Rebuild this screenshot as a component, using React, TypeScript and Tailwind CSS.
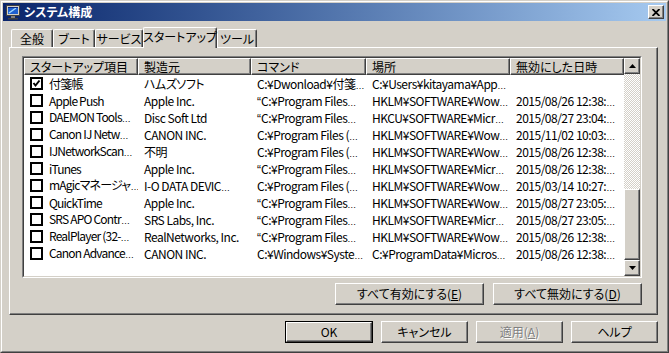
import React from 'react';

type Row = { on: boolean; name: string; maker: string; cmd: string; loc: string; date: string };

const rows: Row[] = [
  { on: true, name: '付箋帳', maker: 'ハムズソフト', cmd: 'C:¥Dwonload¥付箋…', loc: 'C:¥Users¥kitayama¥App…', date: '' },
  { on: false, name: 'Apple Push', maker: 'Apple Inc.', cmd: '“C:¥Program Files…', loc: 'HKLM¥SOFTWARE¥Wow…', date: '2015/08/26 12:38:…' },
  { on: false, name: 'DAEMON Tools…', maker: 'Disc Soft Ltd', cmd: '“C:¥Program Files…', loc: 'HKCU¥SOFTWARE¥Micr…', date: '2015/08/27 23:04:…' },
  { on: false, name: 'Canon IJ Netw…', maker: 'CANON INC.', cmd: 'C:¥Program Files (…', loc: 'HKLM¥SOFTWARE¥Wow…', date: '2015/11/02 10:03:…' },
  { on: false, name: 'IJNetworkScan…', maker: '不明', cmd: 'C:¥Program Files (…', loc: 'HKLM¥SOFTWARE¥Wow…', date: '2015/08/26 12:38:…' },
  { on: false, name: 'iTunes', maker: 'Apple Inc.', cmd: '“C:¥Program Files…', loc: 'HKLM¥SOFTWARE¥Micr…', date: '2015/08/26 12:38:…' },
  { on: false, name: 'mAgicマネージャ…', maker: 'I-O DATA DEVIC…', cmd: 'C:¥Program Files (…', loc: 'HKLM¥SOFTWARE¥Wow…', date: '2015/03/14 10:27:…' },
  { on: false, name: 'QuickTime', maker: 'Apple Inc.', cmd: '“C:¥Program Files…', loc: 'HKLM¥SOFTWARE¥Wow…', date: '2015/08/27 23:05:…' },
  { on: false, name: 'SRS APO Contr…', maker: 'SRS Labs, Inc.', cmd: '“C:¥Program Files…', loc: 'HKLM¥SOFTWARE¥Micr…', date: '2015/08/27 23:05:…' },
  { on: false, name: 'RealPlayer (32-…', maker: 'RealNetworks, Inc.', cmd: '“C:¥Program Files…', loc: 'HKLM¥SOFTWARE¥Wow…', date: '2015/08/26 12:38:…' },
  { on: false, name: 'Canon Advance…', maker: 'CANON INC.', cmd: 'C:¥Windows¥Syste…', loc: 'C:¥ProgramData¥Micros…', date: '2015/08/26 12:38:…' },
];

// classic raised 3d edge
const raised =
  'border border-t-white border-l-white border-r-[#404040] border-b-[#404040] shadow-[inset_-1px_-1px_0_#808080] bg-[#d4d0c8]';

// the CJK font draws … and “ full width; swap to narrow latin glyphs
function T({ s }: { s: string }) {
  const parts = s.split(/([…“])/);
  return (
    <>
      {parts.map((p, i) =>
        p === '…' ? (
          <span key={i} className="font-['Liberation_Sans'] text-[9px] tracking-normal">
            …
          </span>
        ) : p === '“' ? (
          <span key={i} className="font-['Liberation_Sans'] tracking-normal">
            “
          </span>
        ) : (
          <React.Fragment key={i}>{p}</React.Fragment>
        ),
      )}
    </>
  );
}

function Arrow({ up }: { up?: boolean }) {
  return (
    <div className={`w-[16px] h-[16px] flex items-center justify-center ${raised}`}>
      <svg width="7" height="4" viewBox="0 0 7 4">
        {up ? <path d="M3.5 0 L7 4 L0 4 Z" fill="#000" /> : <path d="M0 0 L7 0 L3.5 4 Z" fill="#000" />}
      </svg>
    </div>
  );
}

function Check({ on }: { on: boolean }) {
  return (
    <span className="w-[13px] h-[13px] border-2 border-black bg-white flex items-center justify-center shrink-0">
      {on && (
        <svg width="9" height="9" viewBox="0 0 9 9">
          <polyline points="1.5,4 3.5,6.5 7.5,1.5" fill="none" stroke="#000" strokeWidth="2" />
        </svg>
      )}
    </span>
  );
}

function Tab({ label, w, active }: { label: string; w: string; active?: boolean }) {
  return (
    <div
      className={`${w} ${
        active ? 'h-[21px] -mb-px relative z-10 pb-[3px]' : 'h-[18px]'
      } border border-b-0 border-t-white border-l-white border-r-[#404040] shadow-[inset_-1px_0_0_#808080] rounded-tl-[2px] rounded-tr-[2px] bg-[#d4d0c8] flex items-center justify-center whitespace-nowrap`}
    >
      {label}
    </div>
  );
}

function Btn({ children, w, dflt, disabled }: { children: React.ReactNode; w: string; dflt?: boolean; disabled?: boolean }) {
  const inner = (
    <div
      className={`h-full w-full flex items-center justify-center whitespace-nowrap ${raised} ${
        disabled ? 'text-[#808080] [text-shadow:1px_1px_0_#fff]' : 'text-black'
      }`}
    >
      {children}
    </div>
  );
  if (dflt) return <div className={`${w} h-[22px] border border-black`}>{inner}</div>;
  return <div className={`${w} h-[22px]`}>{inner}</div>;
}

const cols = ['w-[114px]', 'w-[113px]', 'w-[115px]', 'w-[144px]', 'w-[114px]'];
const heads = ['スタートアップ項目', '製造元', 'コマンド', '場所', '無効にした日時'];

export default function App() {
  return (
    <div className="w-[669px] h-[353px] bg-[#d4d0c8] border border-t-[#d4d0c8] border-l-[#d4d0c8] border-r-[#404040] border-b-[#404040] font-['Noto_Sans_CJK_JP',sans-serif] [font-feature-settings:'palt'] text-[12px] text-black leading-none select-none">
      <div className="h-full border border-t-white border-l-white border-r-[#808080] border-b-[#808080] p-px flex flex-col">
        {/* title bar */}
        <div className="h-[18px] bg-linear-to-r from-[#0a246a] to-[#a6caf0] flex items-center pl-[2px] pr-[2px]">
          <svg width="16" height="16" viewBox="0 0 16 16" className="shrink-0">
            <rect x="1.5" y="1.5" width="13" height="10" fill="#d4d0c8" stroke="#404040" />
            <rect x="3" y="3" width="10" height="7" fill="#1d5fd0" />
            <path d="M4 9 L11 4" stroke="#9fd8ff" strokeWidth="1.5" />
            <rect x="3" y="3" width="10" height="1" fill="#0a2a80" />
            <rect x="6" y="12" width="4" height="2" fill="#808080" />
            <rect x="3" y="14" width="10" height="1.5" fill="#404040" />
          </svg>
          <span className="ml-[3px] text-white font-bold text-[12px]">システム構成</span>
          <div className={`ml-auto w-[16px] h-[14px] flex items-center justify-center ${raised}`}>
            <svg width="8" height="7" viewBox="0 0 8 7">
              <path d="M0.5 0 L7.5 7 M7.5 0 L0.5 7" stroke="#000" strokeWidth="1.8" />
            </svg>
          </div>
        </div>

        <div className="px-[6px] pt-[6px] flex flex-col">
          {/* tabs */}
          <div className="h-[20px] pl-[2px] flex items-end">
            <Tab label="全般" w="w-[42px]" />
            <Tab label="ブート" w="w-[42px]" />
            <Tab label="サービス" w="w-[48px]" />
            <Tab label="スタートアップ" w="w-[74px]" active />
            <Tab label="ツール" w="w-[40px]" />
          </div>

          {/* panel */}
          <div className="w-[649px] h-[268px] border border-t-white border-l-white border-r-[#404040] border-b-[#404040] shadow-[inset_-1px_-1px_0_#808080] pl-[12px] pt-[8px] flex flex-col">
            <div className="w-[620px] h-[222px] border border-t-[#808080] border-l-[#808080] border-r-white border-b-white">
              <div className="h-full border border-t-[#404040] border-l-[#404040] border-r-[#d4d0c8] border-b-[#d4d0c8] bg-white flex">
                <div className="w-[600px] flex flex-col">
                  <div className="h-[17px] flex">
                    {heads.map((h, i) => (
                      <div key={h} className={`${cols[i]} h-full pl-[5px] leading-[15px] whitespace-nowrap overflow-hidden ${raised}`}>
                        {h}
                      </div>
                    ))}
                  </div>
                  {rows.map((r) => (
                    <div key={r.name} className="h-[17px] flex whitespace-nowrap tracking-[-0.5px] leading-[17px]">
                      <div className={`${cols[0]} h-full pl-[6px] flex items-center gap-[6px] overflow-hidden`}>
                        <Check on={r.on} />
                        <span className="tracking-[-0.8px]">
                          <T s={r.name} />
                        </span>
                      </div>
                      <div className={`${cols[1]} h-full pl-[6px] overflow-hidden`}>
                        <T s={r.maker} />
                      </div>
                      <div className={`${cols[2]} h-full pl-[6px] overflow-hidden`}>
                        <T s={r.cmd} />
                      </div>
                      <div className={`${cols[3]} h-full pl-[6px] overflow-hidden`}>
                        <T s={r.loc} />
                      </div>
                      <div className={`${cols[4]} h-full pl-[6px] overflow-hidden`}>
                        <T s={r.date} />
                      </div>
                    </div>
                  ))}
                </div>
                {/* scrollbar */}
                <div className="w-[16px] flex flex-col">
                  <Arrow up />
                  <div className="h-[115px] bg-[image:repeating-conic-gradient(#d4d0c8_0_25%,#ffffff_0_50%)] bg-[length:2px_2px]" />
                  <div className={`h-[71px] ${raised}`} />
                  <Arrow />
                </div>
              </div>
            </div>

            <div className="w-[620px] mt-[5px] flex justify-end gap-[9px]">
              <Btn w="w-[149px]">
                すべて有効にする(<span className="underline">E</span>)
              </Btn>
              <Btn w="w-[149px]">
                すべて無効にする(<span className="underline">D</span>)
              </Btn>
            </div>
          </div>

          {/* dialog buttons */}
          <div className="w-[649px] mt-[6px] flex justify-end gap-[8px]">
            <Btn w="w-[88px]" dflt>
              OK
            </Btn>
            <Btn w="w-[87px]">キャンセル</Btn>
            <Btn w="w-[87px]" disabled>
              適用(<span className="underline">A</span>)
            </Btn>
            <Btn w="w-[87px]">ヘルプ</Btn>
          </div>
        </div>
      </div>
    </div>
  );
}
